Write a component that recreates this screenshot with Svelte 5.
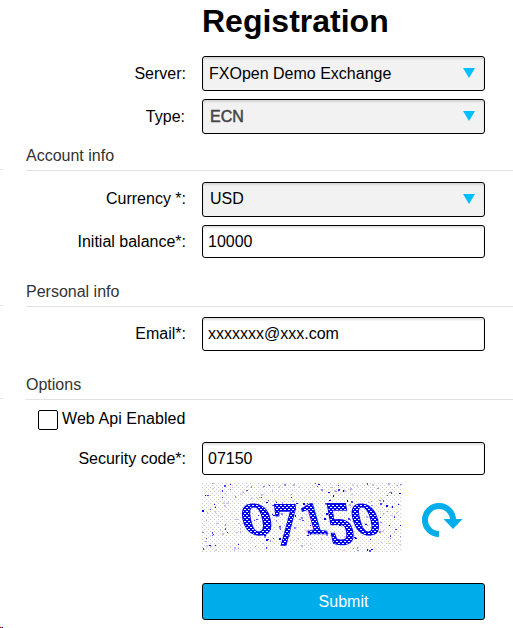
<script>
  let server = "FXOpen Demo Exchange";
  let type = "ECN";
  let currency = "USD";
  let balance = "10000";
  let email = "xxxxxxx@xxx.com";
  let webApi = false;
  let code = "07150";

  // placement of every captcha digit
  const digits = [
    { char: "0", transform: "translate(43 51) skewX(12) scale(1.28 0.96)" },
    { char: "7", transform: "translate(75 61) skewX(7) scale(1.02 1.27)" },
    { char: "1", transform: "translate(103 50) skewX(16) scale(1.05 0.94)" },
    { char: "5", transform: "translate(129 60) skewX(10) scale(1.08 1.27)" },
    { char: "0", transform: "translate(154 51) skewX(15) scale(1.15 0.96)" },
  ];

  // small seeded generator so the noise stays the same between renders
  let seed = 41;
  function random() {
    seed = (seed * 16807) % 2147483647;
    return seed / 2147483647;
  }

  const colors = ["#0000f0", "#4a42f0", "#8f88f5", "#b9b4f5", "#d2ccf4", "#d9b8f4"];
  const noise = Array.from({ length: 300 }, (_, i) => ({
    x: Math.floor(random() * 199),
    y: Math.floor(random() * 69),
    w: random() > 0.5 ? 2 : 1,
    h: random() > 0.65 ? 2 : 1,
    fill: colors[i % colors.length],
  }));
</script>

<div class="page">
  <!-- end of the lines of the column on the left -->
  <div class="side">
    <i class="line first"></i>
    <i class="line second"></i>
    <i class="line third"></i>
    <i class="corner"></i>
  </div>

  <form class="registration" on:submit|preventDefault>
    <h1>Registration</h1>

    <div class="row">
      <label for="server">Server:</label>
      <button type="button" class="field select" id="server">
        <span>{server}</span>
        <svg width="12" height="10" viewBox="0 0 12 10"><path d="M0 0H12L6 10Z" /></svg>
      </button>
    </div>
    <div class="row type">
      <label for="type">Type:</label>
      <button type="button" class="field select muted" id="type">
        <span>{type}</span>
        <svg width="12" height="10" viewBox="0 0 12 10"><path d="M0 0H12L6 10Z" /></svg>
      </button>
    </div>

    <h2 class="account">Account info</h2>
    <div class="row currency">
      <label for="currency">Currency *:</label>
      <button type="button" class="field select" id="currency">
        <span>{currency}</span>
        <svg width="12" height="10" viewBox="0 0 12 10"><path d="M0 0H12L6 10Z" /></svg>
      </button>
    </div>
    <div class="row balance">
      <label for="balance">Initial balance*:</label>
      <input class="field" id="balance" bind:value={balance} />
    </div>

    <h2 class="personal">Personal info</h2>
    <div class="row email">
      <label for="email">Email*:</label>
      <input class="field" id="email" bind:value={email} />
    </div>

    <h2 class="options">Options</h2>
    <label class="check">
      <input type="checkbox" bind:checked={webApi} />
      <span>Web Api Enabled</span>
    </label>
    <div class="row code">
      <label for="code">Security code*:</label>
      <input class="field" id="code" bind:value={code} />
    </div>

    <div class="captcha">
      <svg class="image" width="200" height="70" viewBox="0 0 200 70" shape-rendering="crispEdges">
        <defs>
          <pattern id="dots" width="8" height="4" patternUnits="userSpaceOnUse">
            <rect x="0" y="0" width="1" height="1" fill="#bdccbd" />
            <rect x="4" y="0" width="1" height="1" fill="#c9d2c5" />
            <rect x="2" y="2" width="1" height="1" fill="#c5d2c5" />
            <rect x="6" y="2" width="1" height="1" fill="#dcc4dc" />
          </pattern>
          <pattern id="holes" width="4" height="4" patternUnits="userSpaceOnUse">
            <rect x="0" y="0" width="2" height="1" fill="#fff" />
            <rect x="2" y="2" width="2" height="1" fill="#fff" />
          </pattern>
        </defs>
        <rect width="200" height="70" fill="url(#dots)" />
        {#each noise as dot}
          <rect x={dot.x} y={dot.y} width={dot.w} height={dot.h} fill={dot.fill} />
        {/each}
        {#each digits as digit}
          <text class="ink" transform={digit.transform}>{digit.char}</text>
        {/each}
        <!-- the mask keeps the dither grid straight over the slanted digits -->
        <mask id="letters" maskUnits="userSpaceOnUse" x="0" y="0" width="200" height="70">
          {#each digits as digit}
            <text class="inner" transform={digit.transform}>{digit.char}</text>
          {/each}
        </mask>
        <rect width="200" height="70" fill="url(#holes)" mask="url(#letters)" />
      </svg>
      <button type="button" class="refresh" aria-label="Refresh">
        <svg width="41" height="35" viewBox="0 0 41 35">
          <path d="M17 31A14 14 0 1 1 31 17" fill="none" stroke="#00adeb" stroke-width="6" />
          <path d="M21.5 16H40.5L31 26Z" fill="#00adeb" />
        </svg>
      </button>
    </div>

    <button class="submit">Submit</button>
  </form>
</div>

<style>
  :global(body) {
    margin: 0;
    background: #fff;
  }

  .page {
    display: flex;
    width: 513px;
    height: 628px;
    overflow: hidden;
    color: #000;
    font-family: "Liberation Sans", Arial, sans-serif;
    font-size: 16px;
    line-height: 18px;
  }

  .side {
    display: flex;
    flex-direction: column;
    width: 26px;
  }

  .line {
    width: 3px;
    height: 1px;
    background: #e1e1e1;
  }

  .first {
    margin-top: 169px;
  }

  .second {
    margin-top: 135px;
  }

  .third {
    margin-top: 92px;
  }

  .corner {
    width: 3px;
    height: 1px;
    margin-top: 228px;
    background: linear-gradient(90deg, #b00 33%, #3a7 33% 66%, #004 66%);
  }

  .registration {
    width: 487px;
  }

  h1 {
    margin: 3px 0 16px 176px;
    font-size: 32px;
    line-height: 37px;
  }

  h2 {
    box-sizing: border-box;
    height: 24px;
    margin: 0;
    border-bottom: 1px solid #e1e1e1;
    color: #333;
    font-size: 16px;
    font-weight: normal;
    line-height: 18px;
  }

  .row {
    display: grid;
    grid-template-columns: 160px 283px;
    column-gap: 16px;
    align-items: center;
    height: 35px;
  }

  .row label {
    text-align: right;
  }

  .type {
    margin-top: 8px;
  }

  .type label {
    padding-right: 1px;
  }

  .account {
    margin-top: 13px;
  }

  .currency {
    margin-top: 11px;
  }

  .currency label,
  .currency span {
    padding-bottom: 2px;
  }

  .balance {
    height: 33px;
    margin-top: 8px;
  }

  .personal {
    margin-top: 25px;
  }

  .email {
    height: 34px;
    margin-top: 10px;
  }

  .options {
    margin-top: 25px;
  }

  .code {
    height: 33px;
    margin-top: 12px;
  }

  .field {
    box-sizing: border-box;
    width: 100%;
    height: 100%;
    padding: 0 5px;
    border: 1px solid #000;
    border-radius: 3px;
    outline: none;
    background: #fff;
    box-shadow: inset 0 2px 2px rgba(0, 0, 0, 0.12);
    color: #000;
    font: inherit;
  }

  .select {
    display: flex;
    align-items: center;
    justify-content: space-between;
    padding: 0 9px 0 6px;
    background: #f2f2f2;
  }

  .currency .select,
  .muted {
    padding-left: 7px;
  }

  .select svg {
    margin-bottom: 1px;
    fill: #00bfff;
  }

  .muted {
    color: #444;
    -webkit-text-stroke: 0.5px #444;
  }

  .check {
    display: flex;
    align-items: flex-start;
    margin: 10px 0 0 12px;
  }

  .check span {
    letter-spacing: 0.07px;
  }

  .check input {
    appearance: none;
    box-sizing: border-box;
    width: 20px;
    height: 20px;
    margin: 0 4px 0 0;
    border: 1px solid #000;
    border-radius: 2px;
  }

  .captcha {
    display: flex;
    align-items: flex-start;
    gap: 20px;
    height: 70px;
    margin: 8px 0 0 176px;
  }

  .image {
    overflow: visible;
  }

  .captcha text {
    font-family: "Liberation Serif", serif;
    font-size: 46px;
  }

  .ink {
    fill: #0000ec;
    stroke: #0000ec;
    stroke-width: 2.6px;
  }

  .inner {
    fill: #fff;
    stroke: #fff;
    stroke-width: 1px;
  }

  .refresh {
    height: 35px;
    margin-top: 20px;
    padding: 0;
    border: 0;
    background: none;
  }

  .submit {
    display: block;
    width: 283px;
    height: 37px;
    margin: 30px 0 0 176px;
    border: 1px solid #000;
    border-radius: 3px;
    background: #00adeb;
    color: #fff;
    font: inherit;
  }
</style>
